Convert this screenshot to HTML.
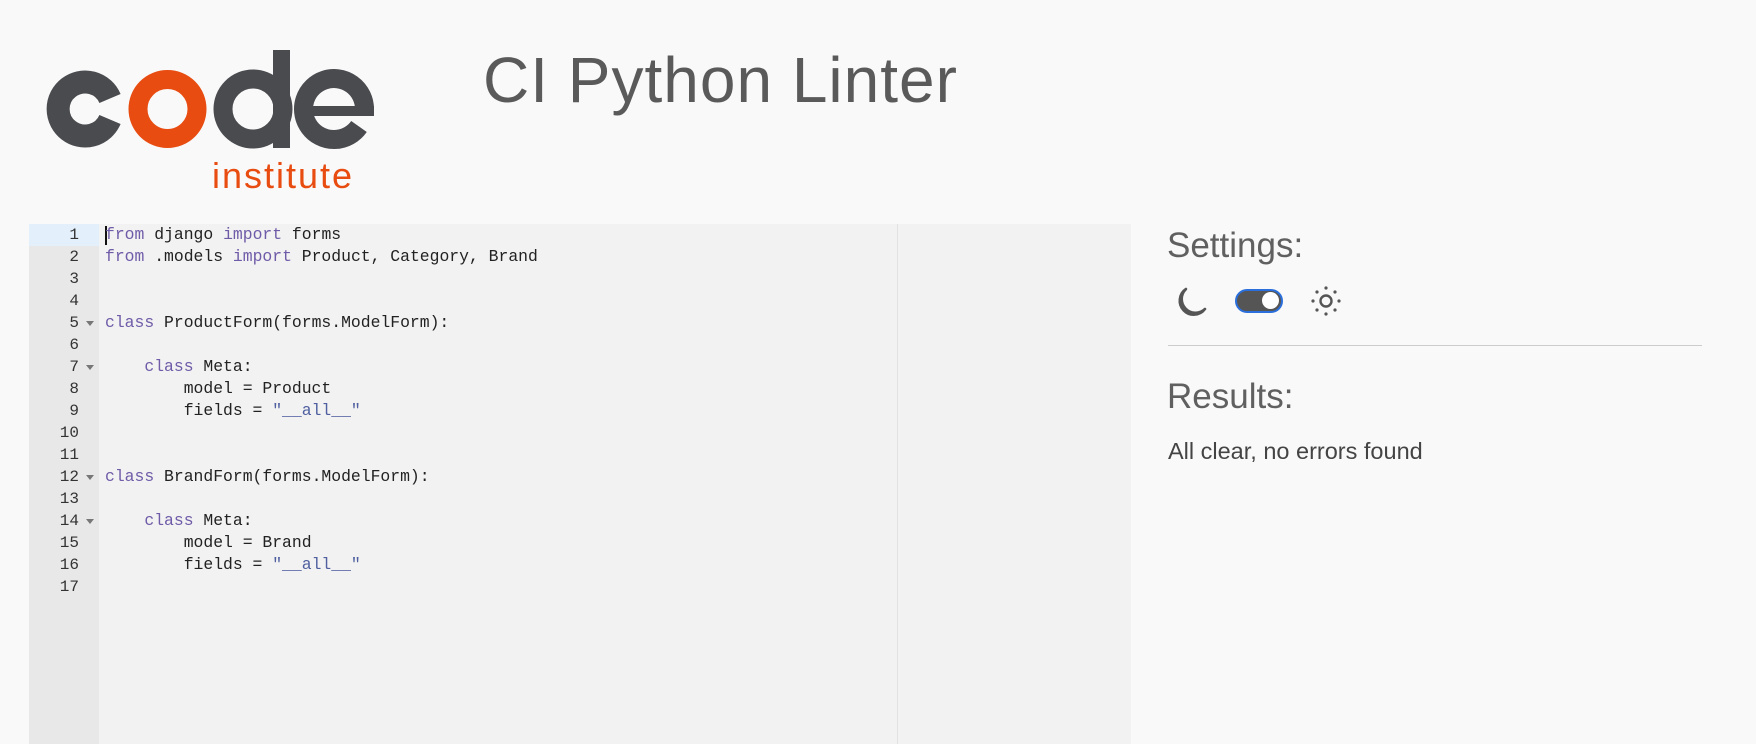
<!DOCTYPE html>
<html><head><meta charset="utf-8"><style>
body{margin:0;width:1756px;height:744px;background:#f9f9f9;position:relative;overflow:hidden;font-family:"Liberation Sans",sans-serif;color:#444}
.abs{position:absolute}
.code{font-family:"Liberation Mono",monospace;font-size:16.4px;line-height:22px;white-space:pre;color:#222}
.k{color:#6f5ba8}.s{color:#4f5fa0}
.ln{position:absolute;left:29px;width:70px;font-family:"Liberation Mono",monospace;font-size:16px;line-height:22px;color:#333}
.ln div{text-align:right;padding-right:20px;position:relative}
.ln .f:after{content:"";position:absolute;right:5px;top:9px;border-left:4px solid transparent;border-right:4px solid transparent;border-top:5px solid #777}
</style></head><body>
<svg class="abs" style="left:0;top:0" width="400" height="160" viewBox="0 0 400 160" fill="none">
<path d="M110 98.5 A27 27 0 1 0 110 119.5" stroke="#4a4b4f" stroke-width="23"/>
<circle cx="167.5" cy="109" r="29.5" stroke="#e84c11" stroke-width="19"/>
<circle cx="253" cy="109" r="30" stroke="#4a4b4f" stroke-width="19"/>
<rect x="273" y="50" width="17" height="98" fill="#4a4b4f"/>
<path d="M364.5 109 A30.5 30.5 0 1 0 359 126.5" stroke="#4a4b4f" stroke-width="19"/>
<rect x="300" y="106" width="74" height="10" fill="#4a4b4f"/>
</svg>
<div class="abs" style="left:212px;top:156px;font-size:36px;color:#e84c11;line-height:40px;letter-spacing:2px">institute</div>
<div class="abs" style="left:483px;top:40px;font-size:64px;color:#5a5a5a;line-height:80px;letter-spacing:1px">CI Python Linter</div>

<div class="abs" style="left:29px;top:224px;width:1102px;height:520px;background:#f2f2f2"></div>
<div class="abs" style="left:29px;top:224px;width:70px;height:520px;background:#e8e8e8"></div>
<div class="abs" style="left:29px;top:224px;width:70px;height:22px;background:#e3effb"></div>
<div class="abs" style="left:897px;top:224px;width:1px;height:520px;background:#e2e2e2"></div>
<div class="ln" style="top:224px">
<div>1</div><div>2</div><div>3</div><div>4</div><div class="f">5</div><div>6</div><div class="f">7</div><div>8</div><div>9</div><div>10</div><div>11</div><div class="f">12</div><div>13</div><div class="f">14</div><div>15</div><div>16</div><div>17</div></div>
<div class="abs" style="left:105px;top:226px;width:2px;height:19px;background:#111"></div>
<div class="abs code" style="left:105px;top:224px"><span class="k">from</span> django <span class="k">import</span> forms
<span class="k">from</span> .models <span class="k">import</span> Product, Category, Brand


<span class="k">class</span> ProductForm(forms.ModelForm):

    <span class="k">class</span> Meta:
        model = Product
        fields = <span class="s">"__all__"</span>


<span class="k">class</span> BrandForm(forms.ModelForm):

    <span class="k">class</span> Meta:
        model = Brand
        fields = <span class="s">"__all__"</span>
</div>

<div class="abs" style="left:1167px;top:223px;font-size:35px;color:#606060;line-height:46px">Settings:</div>
<svg class="abs" style="left:1174px;top:284px" width="36" height="36" viewBox="0 0 36 36"><path d="M12 5 A14 14 0 1 0 31 25 A13 13 0 0 1 12 5 Z" fill="none" stroke="#555" stroke-width="2.6" stroke-linejoin="round"/></svg>
<div class="abs" style="left:1235px;top:289px;border:2px solid #2a6fdb;border-radius:13px;background:#555;width:44px;height:20px"></div>
<div class="abs" style="left:1262px;top:292px;width:17px;height:17px;border-radius:50%;background:#fff"></div>
<svg class="abs" style="left:1310px;top:285px" width="32" height="32" viewBox="0 0 32 32" fill="#555"><circle cx="16" cy="16" r="5.5" fill="none" stroke="#555" stroke-width="2.4"/><circle cx="16" cy="3" r="1.6"/><circle cx="16" cy="29" r="1.6"/><circle cx="3" cy="16" r="1.6"/><circle cx="29" cy="16" r="1.6"/><circle cx="7" cy="7" r="1.6"/><circle cx="25" cy="7" r="1.6"/><circle cx="7" cy="25" r="1.6"/><circle cx="25" cy="25" r="1.6"/></svg>
<div class="abs" style="left:1168px;top:345px;width:534px;height:1px;background:#ccc"></div>
<div class="abs" style="left:1167px;top:374px;font-size:35px;color:#606060;line-height:46px">Results:</div>
<div class="abs" style="left:1168px;top:438px;font-size:23.5px;color:#444;line-height:26px">All clear, no errors found</div>
</body></html>
